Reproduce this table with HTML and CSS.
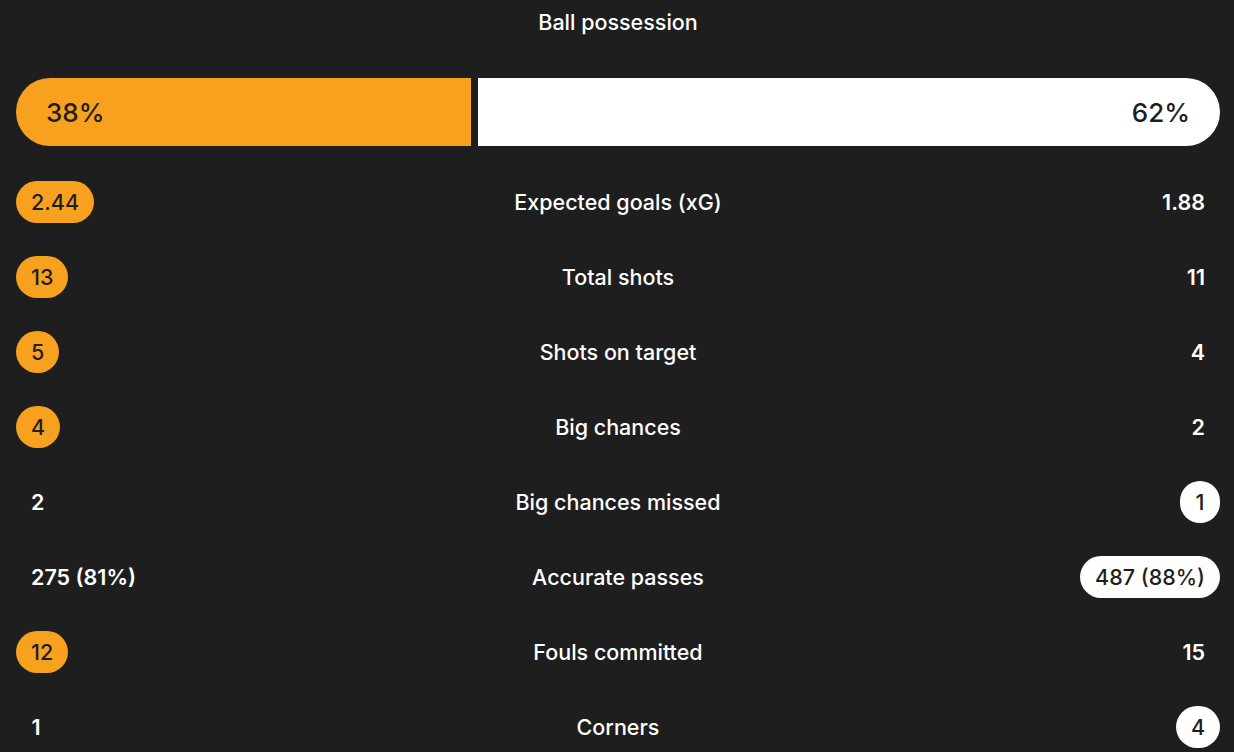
FILE: index.html
```html
<!DOCTYPE html>
<html>
<head>
<meta charset="utf-8">
<link rel="stylesheet" href="styles.css">
</head>
<body>
<div class="stats">
  <div class="title">Ball possession</div>
  <div class="possession">
    <div class="poss home" style="flex-basis: 38%">38%</div>
    <div class="poss away" style="flex-basis: 62%">62%</div>
  </div>
  <div class="rows">
    <div class="row"><div class="val left"><span class="pill win-home">2.44</span></div><div class="label">Expected goals (xG)</div><div class="val right"><span class="pill">1.88</span></div></div>
    <div class="row"><div class="val left"><span class="pill win-home">13</span></div><div class="label">Total shots</div><div class="val right"><span class="pill">11</span></div></div>
    <div class="row"><div class="val left"><span class="pill win-home">5</span></div><div class="label">Shots on target</div><div class="val right"><span class="pill">4</span></div></div>
    <div class="row"><div class="val left"><span class="pill win-home">4</span></div><div class="label">Big chances</div><div class="val right"><span class="pill">2</span></div></div>
    <div class="row"><div class="val left"><span class="pill">2</span></div><div class="label">Big chances missed</div><div class="val right"><span class="pill win-away">1</span></div></div>
    <div class="row"><div class="val left"><span class="pill">275 (81%)</span></div><div class="label">Accurate passes</div><div class="val right"><span class="pill win-away">487 (88%)</span></div></div>
    <div class="row"><div class="val left"><span class="pill win-home">12</span></div><div class="label">Fouls committed</div><div class="val right"><span class="pill">15</span></div></div>
    <div class="row"><div class="val left"><span class="pill">1</span></div><div class="label">Corners</div><div class="val right"><span class="pill win-away">4</span></div></div>
  </div>
</div>
</body>
</html>
```
FILE: styles.css
```css
html, body {
  margin: 0;
  padding: 0;
  background: #1e1e1e;
}
body {
  font-family: Inter, "Noto Sans", sans-serif;
  color: #ffffff;
  width: 1234px;
  height: 752px;
  overflow: hidden;
}
.stats {
  padding: 0 14px 0 16px;
}
.title {
  height: 44px;
  line-height: 44px;
  text-align: center;
  font-size: 21.5px;
  font-weight: 500;
}
.possession {
  margin-top: 34px;
  display: flex;
  gap: 7px;
  height: 68px;
}
.poss {
  display: flex;
  align-items: center;
  box-sizing: border-box;
  flex-grow: 0;
  flex-shrink: 1;
  font-size: 26px;
  font-weight: 500;
  color: #1e1e1e;
  padding: 0 30px;
  min-width: 0;
}
.poss.home {
  background: #f8a11e;
  border-radius: 34px 0 0 34px;
}
.poss.away {
  background: #ffffff;
  border-radius: 0 34px 34px 0;
  justify-content: flex-end;
}
.rows {
  margin-top: 18px;
}
.row {
  display: grid;
  grid-template-columns: 1fr auto 1fr;
  align-items: center;
  height: 75px;
}
.val {
  display: flex;
}
.val.right {
  justify-content: flex-end;
}
.label {
  font-size: 21.5px;
  font-weight: 500;
  text-align: center;
}
.pill {
  display: inline-flex;
  align-items: center;
  justify-content: center;
  height: 42px;
  min-width: 40px;
  box-sizing: border-box;
  padding: 0 15px;
  border-radius: 21px;
  font-size: 21.5px;
  font-weight: 600;
}
.pill.win-home {
  background: #f8a11e;
  color: #1e1e1e;
  font-weight: 500;
}
.pill.win-away {
  background: #ffffff;
  color: #1e1e1e;
  font-weight: 500;
}
```
